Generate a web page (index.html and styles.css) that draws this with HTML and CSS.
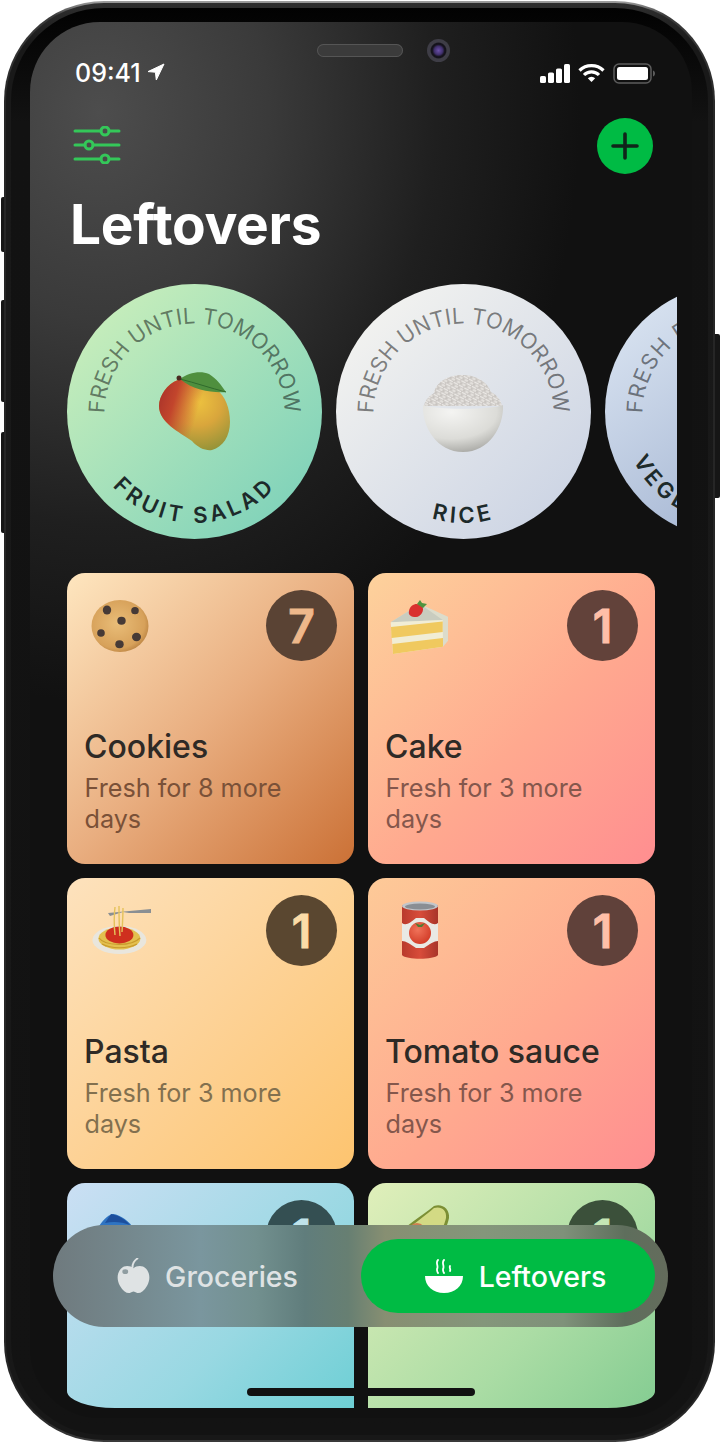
FILE: index.html
```html
<!DOCTYPE html>
<html lang="en">
<head>
<meta charset="utf-8">
<title>Leftovers</title>
<link rel="stylesheet" href="styles.css">
</head>
<body>
<div class="phone">
  <i class="side-btn left b1"></i><i class="side-btn left b2"></i><i class="side-btn left b3"></i><i class="side-btn right b4"></i>
  <div class="band"><div class="rim">
    <main class="screen">
      <i class="speaker"></i><i class="camera"></i>
      <div class="status">
        <div class="clock"><span>09:41</span>
          <svg class="loc" width="18" height="18" viewBox="0 0 18 18"><path d="M17 1 1 8.600l7.400.6.9 7.800z" fill="#fff" stroke="#fff" stroke-linejoin="round"/></svg>
        </div>
        <div class="sys">
          <svg width="30" height="19" viewBox="0 0 30 19" fill="#fff"><rect x="0" y="12" width="6" height="7" rx="1.600"/><rect x="8" y="8.500" width="6" height="10.500" rx="1.600"/><rect x="16" y="4.500" width="6" height="14.500" rx="1.600"/><rect x="24" y="0" width="6" height="19" rx="1.600"/></svg>
          <svg width="27" height="20" viewBox="0 0 27 20" fill="none" stroke="#fff" stroke-width="3.200"><path d="M1.500 7.500a17 17 0 0 1 24 0"/><path d="M6 12a10.500 10.500 0 0 1 15 0"/><path d="M13.500 19 9.800 15.200a5.200 5.200 0 0 1 7.400 0z" fill="#fff" stroke="none"/></svg>
          <svg width="42" height="21" viewBox="0 0 42 21" fill="none"><rect x="1" y="1" width="37" height="19" rx="5" stroke="#5c5c5c" stroke-width="1.500"/><rect x="4" y="4" width="31" height="13" rx="2.500" fill="#fff"/><path d="M40 7.500c1.500.5 2 1.600 2 3s-.5 2.500-2 3z" fill="#5c5c5c"/></svg>
        </div>
      </div>

      <header class="header">
        <svg class="sliders" width="48" height="38" viewBox="0 0 48 38" fill="none" stroke="#34c759" stroke-width="3" stroke-linecap="round"><path d="M2 5h26m8 0h10M2 19h10m8 0h26M2 33h26m8 0h10"/><circle cx="32" cy="5" r="4"/><circle cx="16" cy="19" r="4"/><circle cx="32" cy="33" r="4"/></svg>
        <button class="add" type="button" aria-label="Add"><svg width="30" height="30" viewBox="0 0 30 30" stroke="#10251a" stroke-width="3.600" stroke-linecap="round"><path d="M15 3v24M3 15h24"/></svg></button>
      </header>

      <h1 class="title">Leftovers</h1>

      <section class="carousel">
        <svg class="disc" width="255" height="255" viewBox="0 0 255 255">
          <defs>
            <linearGradient id="g-fruit" x1="0.1" y1="0.1" x2="0.9" y2="0.9"><stop offset="0" stop-color="#c8eebb"/><stop offset="1" stop-color="#7fd2ba"/></linearGradient>
            <path id="top-arc" d="M37.500 127.500a90 90 0 0 1 180 0"/>
            <path id="bot-arc" d="M17.500 127.500a110 110 0 0 0 220 0"/>
            <radialGradient id="g-mango" cx="0.55" cy="0.32" r="0.75"><stop offset="0" stop-color="#edc23f"/><stop offset="0.45" stop-color="#d9a63c"/><stop offset="1" stop-color="#8c9138"/></radialGradient>
            <linearGradient id="g-mango-red" x1="0" y1="0.1" x2="1" y2="0.4"><stop offset="0" stop-color="#a8322a"/><stop offset="0.25" stop-color="#c2452c"/><stop offset="0.6" stop-color="#d0552f" stop-opacity="0"/></linearGradient>
          </defs>
          <circle cx="127.500" cy="127.500" r="127.500" fill="url(#g-fruit)"/>
          <text class="arc-top"><textPath href="#top-arc" textLength="282">FRESH UNTIL TOMORROW</textPath></text>
          <text class="arc-bot"><textPath href="#bot-arc" startOffset="50%" text-anchor="middle">FRUIT SALAD</textPath></text>
          <path d="M111 96C100 100 92 112 92 122c0 16 20 26 33 35 6 7 14 10 20 9 11-3 18-14 18-28 0-14-5-26-13-32-12-6-28-14-39-10z" fill="url(#g-mango)"/>
          <path d="M111 96C100 100 92 112 92 122c0 16 20 26 33 35 6 7 14 10 20 9 11-3 18-14 18-28 0-14-5-26-13-32-12-6-28-14-39-10z" fill="url(#g-mango-red)"/>
          <path d="M113 95c8-6 20-9 29-5 8 5 12 11 17 18-12 1-32-1-46-13z" fill="#4f8f3e"/>
          <path d="M113 95c16 4 30 9 46 13" fill="none" stroke="#2f6a2c" stroke-width="1"/>
          <circle cx="112" cy="94" r="2.500" fill="#4a2a20"/>
        </svg>

        <svg class="disc" width="255" height="255" viewBox="0 0 255 255">
          <defs>
            <linearGradient id="g-rice" x1="0.1" y1="0.1" x2="0.9" y2="0.9"><stop offset="0" stop-color="#f3f3f0"/><stop offset="1" stop-color="#ccd4e4"/></linearGradient>
            <radialGradient id="g-bowl" cx="0.35" cy="0.15" r="0.95"><stop offset="0" stop-color="#f4f4f2"/><stop offset="0.6" stop-color="#dcdcd8"/><stop offset="1" stop-color="#9f9f9b"/></radialGradient>
            <pattern id="p-rice" width="6" height="5" patternUnits="userSpaceOnUse" patternTransform="rotate(28)"><rect width="6" height="5" fill="#c9c5c1"/><path d="M.5 1.500h4M3 4h3" stroke="#ece9e6" stroke-width="1.300" stroke-linecap="round"/></pattern>
          </defs>
          <circle cx="127.500" cy="127.500" r="127.500" fill="url(#g-rice)"/>
          <text class="arc-top"><textPath href="#top-arc" textLength="282">FRESH UNTIL TOMORROW</textPath></text>
          <text class="arc-bot"><textPath href="#bot-arc" startOffset="50%" text-anchor="middle">RICE</textPath></text>
          <path d="M88 122c1-6 5-10 10-13 2-11 14-18 28-18 14 0 25 6 29 17 6 3 10 8 11 14z" fill="url(#p-rice)"/>
          <path d="M87 121c12 5 68 5 80 0 1 22-14 47-40 47s-41-25-40-47z" fill="url(#g-bowl)"/>
        </svg>

        <svg class="disc" width="255" height="255" viewBox="0 0 255 255">
          <defs><linearGradient id="g-veg" x1="0" y1="0.1" x2="0.6" y2="0.9"><stop offset="0" stop-color="#dbe5f2"/><stop offset="1" stop-color="#a5b6d3"/></linearGradient></defs>
          <circle cx="127.500" cy="127.500" r="127.500" fill="url(#g-veg)"/>
          <text class="arc-top"><textPath href="#top-arc" textLength="282">FRESH FOR TWO WEEKS</textPath></text>
          <text class="arc-bot"><textPath href="#bot-arc" startOffset="49">VEGETABLES</textPath></text>
        </svg>
      </section>

      <section class="list"><div class="grid">
        <article class="card cookies">
          <div class="card-top">
            <svg class="emoji" width="64" height="64" viewBox="0 0 64 64"><defs><radialGradient id="g-cookie" cx="0.45" cy="0.45" r="0.6"><stop offset="0" stop-color="#e9bd78"/><stop offset="0.8" stop-color="#d7a15a"/><stop offset="1" stop-color="#b98140"/></radialGradient></defs><ellipse cx="35" cy="30" rx="28.500" ry="26" fill="url(#g-cookie)"/><g fill="#463a36"><ellipse cx="22" cy="14" rx="4.200" ry="4.500"/><ellipse cx="50" cy="14.700" rx="3.800" ry="3.600"/><ellipse cx="36.500" cy="24.700" rx="4.200" ry="4"/><ellipse cx="16" cy="37" rx="3.800" ry="3.800"/><ellipse cx="51.500" cy="41" rx="4.500" ry="4.200"/><ellipse cx="34.500" cy="48.300" rx="4.200" ry="4"/></g></svg>
            <div class="badge">7</div>
          </div>
          <div class="card-text"><h2>Cookies</h2><p>Fresh for 8 more days</p></div>
        </article>

        <article class="card cake">
          <div class="card-top">
            <svg class="emoji" width="64" height="64" viewBox="0 0 64 64"><path d="M4.700 26.300 34 8l28 12.700v24L57 50.700z" fill="#dcdccb"/><path d="M4.700 26.300 34 8l22.700 16z" fill="#c9ccbf"/><path d="M4.700 26.300 56.700 24l.3 26.700L7 58z" fill="#f1edd5"/><path d="M5 31 56.700 25.500v10.500L5.500 42z" fill="#f0c95f"/><path d="M6.300 48 57 42v8.700L7 58z" fill="#f0c95f"/><path d="M23 15c1-7 9-9 13-5 3 4-1 11-6 11-5 0-8-2-7-6z" fill="#d9302f"/><path d="M31 8l3-4 2 3 5 1-4 4z" fill="#4f9440"/></svg>
            <div class="badge">1</div>
          </div>
          <div class="card-text"><h2>Cake</h2><p>Fresh for 3 more days</p></div>
        </article>

        <article class="card pasta">
          <div class="card-top">
            <svg class="emoji" width="64" height="64" viewBox="0 0 64 64" overflow="visible"><ellipse cx="34.400" cy="39" rx="27" ry="14" fill="#e9e6dd"/><ellipse cx="34.400" cy="37.500" rx="21" ry="11" fill="#e3c04f"/><path d="M14 37c6 8 32 9 41 0M17 43c9 5 26 5 35 0" fill="none" stroke="#c99b2d" stroke-width="1.200"/><ellipse cx="34.400" cy="34" rx="14" ry="8.500" fill="#cf2f1e"/><path d="M23 12 66 8v4l-22 0-6-1-13 4z" fill="#8a8f93"/><path d="M30 6c-1 8-1 18 0 28M34 5c0 9 0 20 1 30M38 7c0 8-.5 16-1 24" fill="none" stroke="#e4c25a" stroke-width="1.400"/></svg>
            <div class="badge">1</div>
          </div>
          <div class="card-text"><h2>Pasta</h2><p>Fresh for 3 more days</p></div>
        </article>

        <article class="card tomato">
          <div class="card-top">
            <svg class="emoji" width="64" height="64" viewBox="0 0 64 64"><defs><linearGradient id="g-can" x1="0" x2="1" y1="0" y2="0"><stop offset="0" stop-color="#b93a2c"/><stop offset="0.5" stop-color="#d84c3a"/><stop offset="1" stop-color="#a8352a"/></linearGradient><radialGradient id="g-tom" cx="0.4" cy="0.35" r="0.7"><stop offset="0" stop-color="#f0735a"/><stop offset="1" stop-color="#d13a26"/></radialGradient></defs><path d="M16 4h36v50c-4 5-32 5-36 0z" fill="url(#g-can)"/><path d="M16 22c4 3 8 0 14-5h8c6 5 10 8 14 5v18c-4 0-8 3-14 7h-8c-6-4-10-7-14-7z" fill="#e9e9e4"/><circle cx="34" cy="32" r="11" fill="url(#g-tom)"/><path d="M29 22l5 2 5-2-3 4h-4z" fill="#4f7d35"/><ellipse cx="34" cy="5" rx="18" ry="4.500" fill="#c3c6ca"/><ellipse cx="34" cy="5.500" rx="15" ry="3" fill="#8a8e94"/></svg>
            <div class="badge">1</div>
          </div>
          <div class="card-text"><h2>Tomato sauce</h2><p>Fresh for 3 more days</p></div>
        </article>

        <article class="card fish">
          <div class="card-top">
            <svg class="emoji" width="64" height="64" viewBox="0 0 64 64"><path d="M12 24C16 16 22 9 28 8c8 1 16 7 22 16 4 8 2 20-12 24H20C8 44 6 32 12 24z" fill="#2f74c2"/><path d="M26 8c6 1 13 4 19 11-8-3-16-4-25-2z" fill="#1d4f9d"/></svg>
            <div class="badge">1</div>
          </div>
        </article>

        <article class="card avocado">
          <div class="card-top">
            <svg class="emoji" width="64" height="64" viewBox="0 0 64 64" overflow="visible"><path d="M48 0C56-3 64 3 63 12 60 28 44 50 27 54 12 56 6 42 12 30 18 20 36 10 48 0z" fill="#7c8f35"/><path d="M48 2C55 0 61 4 60 12 57 27 42 47 27 51 14 53 9 41 15 31 21 22 38 11 48 2z" fill="#d3da84"/><circle cx="31" cy="26" r="9" fill="#cf7d50"/></svg>
            <div class="badge">1</div>
          </div>
        </article>
      </div></section>

      <nav class="tabbar">
        <a class="tab groceries">
          <svg width="33" height="36" viewBox="0 0 34 36" fill="#dfe3e4"><path d="M17 10c-3-2.500-9-3.500-13 .5C0 15-.5 22 3 28c3 5.500 7 8 10 7.500 2-.3 3-1.500 4-1.500s2 1.200 4 1.500c3 .5 7-2 10-7.500 3.500-6 3-13-1-17.500-4-4-10-3-13-.5z"/><path d="M16 9c0-4 2-7 5-9" fill="none" stroke="#dfe3e4" stroke-width="2" stroke-linecap="round"/><ellipse cx="8.500" cy="13.500" rx="3" ry="2.500" fill="#8f9da1"/></svg>
          <span>Groceries</span>
        </a>
        <a class="tab leftovers">
          <svg width="38" height="34" viewBox="0 0 38 34" fill="#fff"><path d="M0 17h38c0 10-8 17-19 17S0 27 0 17z"/><path d="M13 1c-3 3 1 6-1 9 0 1 0 3 1 4M19 1c-3 3 1 6-1 9 0 1 0 3 1 4M25 7c-1 2 1 3 0 5" fill="none" stroke="#fff" stroke-width="1.800" stroke-linecap="round"/></svg>
          <span>Leftovers</span>
        </a>
      </nav>
      <i class="home"></i>
    </main>
  </div></div>
</div>
</body>
</html>
```

FILE: styles.css
```css
* { box-sizing: border-box; }
html, body { margin: 0; height: 1443px; overflow: hidden; background: #fff; }
body { font-family: Inter, "Liberation Sans", sans-serif; }

.phone {
  position: relative;
  width: 711px;
  height: 1441px;
  margin: 1px 0 0 4px;
  padding: 2px;
  border-radius: 100px;
  background: linear-gradient(180deg, #a0a0a0 0, #3a3a3a 1%, #262626 8%, #262626 98%, #3a3a3a 100%);
}
.side-btn { position: absolute; display: block; background: #161616; }
.side-btn.left { left: -3px; width: 3px; border-radius: 2px 0 0 2px; }
.side-btn.right { right: -5px; width: 5px; border-radius: 0 2px 2px 0; }
.b1 { top: 196px; height: 55px; }
.b2 { top: 299px; height: 102px; }
.b3 { top: 431px; height: 101px; }
.b4 { top: 333px; height: 164px; }

.band { height: 100%; padding: 5px; border-radius: 98px; background: linear-gradient(180deg, #2e2e2e 0, #191919 3%, #181818 100%); }
.rim { height: 100%; padding: 14px 16px 17px 19px; border-radius: 93px; background: linear-gradient(180deg, #020202 0, #121212 8%, #131313 100%); }

.screen {
  position: relative;
  height: 100%;
  padding: 38px 37px 0;
  border-radius: 70px;
  background: #111 radial-gradient(ellipse 480px 590px at 70px 90px, #4d4d4d 0, #3a3a3a 35%, #1f1f1f 70%, #111 100%) no-repeat;
}

.speaker { position: absolute; left: 287px; top: 22px; width: 86px; height: 13px; border-radius: 7px; background: #3b3b3b; box-shadow: inset 0 0 0 1px #555; }
.camera { position: absolute; left: 397px; top: 17px; width: 23px; height: 23px; border-radius: 50%; background: radial-gradient(circle at 50% 50%, #6a4fa8 0, #3f2f6b 26%, #15131c 38%, #15131c 45%, #3e3d46 52%); }

.status { display: flex; justify-content: space-between; align-items: center; height: 26px; padding-left: 8px; }
.clock { display: flex; align-items: center; gap: 6px; color: #fff; font-size: 25px; font-weight: 500; }
.loc { margin-top: -2px; }
.sys { display: flex; align-items: center; gap: 8px; }

.header { display: flex; justify-content: space-between; align-items: center; height: 56px; margin-top: 32px; padding: 0 2px 0 6px; }
.sliders { display: block; margin-top: -2px; }
.add { display: flex; align-items: center; justify-content: center; width: 56px; height: 56px; padding: 0; border: 0; border-radius: 50%; background: #00bb44; }

.title { margin: 20px 0 0 3px; color: #fff; font-size: 55px; font-weight: 700; line-height: 60px; letter-spacing: -0.3px; }

.carousel { display: flex; gap: 14px; margin: 30px -22px 0 0; overflow: hidden; }
.disc { flex: none; display: block; }
.arc-top { font-size: 22px; font-weight: 400; fill: #000; fill-opacity: 0.48; transform: translateY(2px); }
.arc-bot { font-size: 22px; font-weight: 600; fill: #1d2a2a; letter-spacing: 3.700px; transform: translateY(1.500px); }

.list { height: 835px; margin-top: 34px; overflow: hidden; border-radius: 0 0 48px 48px / 0 0 17px 17px; }
.grid { display: grid; grid-template-columns: 287px 287px; grid-auto-rows: 291px; gap: 14px; }

.card { display: flex; flex-direction: column; justify-content: space-between; padding: 17px 17px 29px 18px; border-radius: 18px; }
.card-top { display: flex; justify-content: space-between; align-items: flex-start; }
.emoji { display: block; margin-top: 6px; }
.badge { display: flex; align-items: center; justify-content: center; width: 71px; height: 71px; border-radius: 50%; font-size: 46px; font-weight: 600; -webkit-text-stroke: 1px currentColor; }
.card-text { margin-left: -1px; }
.card-text h2 { margin: 0 0 7px; color: #2e2a26; font-size: 32px; font-weight: 500; line-height: 38px; }
.card-text p { width: 215px; margin: 0 0 0 0.500px; font-size: 25.200px; line-height: 31px; }

.cookies { background: linear-gradient(135deg, #fee6bf 0, #e9ae80 50%, #cb7136 100%); }
.cookies .badge { background: #5a4334; color: #eeb88b; }
.cookies p { color: #7a5138; }
.cake { background: linear-gradient(135deg, #fdd29c 0, #ffa98f 55%, #ff8e90 100%); }
.cake .badge { background: #62423a; color: #ffbfa8; }
.cake p { color: #84574c; }
.pasta { background: linear-gradient(135deg, #fde2bd 0, #fdd296 50%, #fdc46f 100%); }
.pasta .badge { background: #5a4730; color: #fcdca7; }
.pasta p { color: #82704f; }
.tomato { background: linear-gradient(135deg, #fdca98 0, #ffa98f 55%, #ff8e90 100%); }
.tomato .badge { background: #60413a; color: #ffbfa8; }
.tomato p { color: #84574c; }
.fish { background: linear-gradient(135deg, #cbdff4 0, #98d8e2 55%, #5fccd0 100%); }
.fish .badge { background: #344f52; color: #bfe3ea; }
.avocado { background: linear-gradient(135deg, #e0efba 0, #aadca4 55%, #78c78c 100%); }
.avocado .badge { background: #3b503a; color: #c5e6b4; }

.tabbar {
  position: absolute;
  left: 23px;
  top: 1203px;
  display: grid;
  grid-template-columns: 1fr 1fr;
  width: 615px;
  height: 102px;
  padding: 14px 13px 14px 14px;
  border-radius: 51px;
  background: linear-gradient(90deg, #6f7a7e 0, #738489 9%, #7a969e 24%, #72908f 33%, #607d7c 41%, #677f72 48%, #878f72 54%, #84967b 70%, #7f917a 83%, #5e6e5c 93%, #646c5c 100%);
}
.tab { display: flex; align-items: center; justify-content: center; gap: 15px; font-size: 28.500px; font-weight: 500; }
.groceries { padding-right: 13px; color: #dfe3e4; }
.leftovers { gap: 16px; padding-left: 15px; border-radius: 37px; background: #00bb44; color: #fff; }
.home { position: absolute; left: 217px; top: 1366px; width: 228px; height: 8px; border-radius: 4px; background: #111; }
```
